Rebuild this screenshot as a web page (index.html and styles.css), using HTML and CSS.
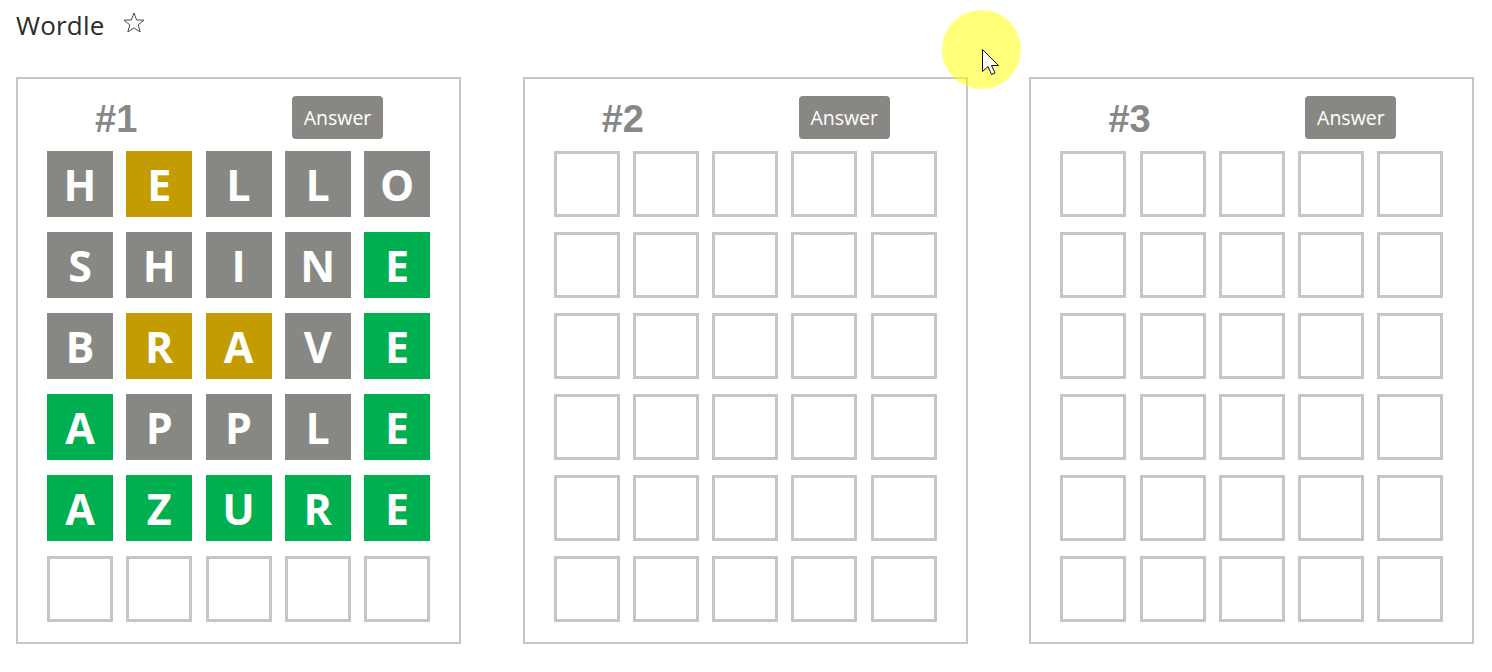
FILE: index.html
```html
<!DOCTYPE html>
<html>
<head>
<meta charset="utf-8">
<link rel="stylesheet" href="styles.css">
</head>
<body>
<div class="page">
  <div class="title-row">
    <span class="title">Wordle</span>
    <svg class="star" width="22" height="21" viewBox="0 0 22 21"><polygon points="11,1 13.6,7.9 21,8.2 15.2,12.9 17.2,20 11,15.9 4.8,20 6.8,12.9 1,8.2 8.4,7.9" fill="none" stroke="#4a4a46" stroke-width="1"/></svg>
  </div>
  <div class="boards">
    <section class="card">
      <div class="card-head"><span class="num">#1</span><button class="answer">Answer</button></div>
      <div class="grid">
        <div class="tile g">H</div><div class="tile y">E</div><div class="tile g">L</div><div class="tile g">L</div><div class="tile g">O</div>
        <div class="tile g">S</div><div class="tile g">H</div><div class="tile g">I</div><div class="tile g">N</div><div class="tile c">E</div>
        <div class="tile g">B</div><div class="tile y">R</div><div class="tile y">A</div><div class="tile g">V</div><div class="tile c">E</div>
        <div class="tile c">A</div><div class="tile g">P</div><div class="tile g">P</div><div class="tile g">L</div><div class="tile c">E</div>
        <div class="tile c">A</div><div class="tile c">Z</div><div class="tile c">U</div><div class="tile c">R</div><div class="tile c">E</div>
        <div class="tile e"></div><div class="tile e"></div><div class="tile e"></div><div class="tile e"></div><div class="tile e"></div>
      </div>
    </section>
    <section class="card">
      <div class="card-head"><span class="num">#2</span><button class="answer">Answer</button></div>
      <div class="grid">
        <div class="tile e"></div><div class="tile e"></div><div class="tile e"></div><div class="tile e"></div><div class="tile e"></div>
        <div class="tile e"></div><div class="tile e"></div><div class="tile e"></div><div class="tile e"></div><div class="tile e"></div>
        <div class="tile e"></div><div class="tile e"></div><div class="tile e"></div><div class="tile e"></div><div class="tile e"></div>
        <div class="tile e"></div><div class="tile e"></div><div class="tile e"></div><div class="tile e"></div><div class="tile e"></div>
        <div class="tile e"></div><div class="tile e"></div><div class="tile e"></div><div class="tile e"></div><div class="tile e"></div>
        <div class="tile e"></div><div class="tile e"></div><div class="tile e"></div><div class="tile e"></div><div class="tile e"></div>
      </div>
    </section>
    <section class="card">
      <div class="card-head"><span class="num">#3</span><button class="answer">Answer</button></div>
      <div class="grid">
        <div class="tile e"></div><div class="tile e"></div><div class="tile e"></div><div class="tile e"></div><div class="tile e"></div>
        <div class="tile e"></div><div class="tile e"></div><div class="tile e"></div><div class="tile e"></div><div class="tile e"></div>
        <div class="tile e"></div><div class="tile e"></div><div class="tile e"></div><div class="tile e"></div><div class="tile e"></div>
        <div class="tile e"></div><div class="tile e"></div><div class="tile e"></div><div class="tile e"></div><div class="tile e"></div>
        <div class="tile e"></div><div class="tile e"></div><div class="tile e"></div><div class="tile e"></div><div class="tile e"></div>
        <div class="tile e"></div><div class="tile e"></div><div class="tile e"></div><div class="tile e"></div><div class="tile e"></div>
      </div>
    </section>
  </div>
</div>
<div class="highlight"></div>
<svg class="cursor" width="18" height="27" viewBox="0 0 18 27"><polygon points="0.5,0.5 0.5,22.5 6,17.5 9.5,25.5 13,24 9.5,16.5 16.5,16.5" fill="#fff" stroke="#111" stroke-width="1" stroke-linejoin="miter"/></svg>
</body>
</html>
```
FILE: styles.css
```css
html, body {
  margin: 0;
  padding: 0;
  background: #ffffff;
}
body {
  font-family: "Open Sans", "Liberation Sans", sans-serif;
  width: 1492px;
  height: 672px;
  overflow: hidden;
  position: relative;
}
.page {
  padding: 8px 0 0 16px;
}
.title-row {
  display: flex;
  align-items: center;
  height: 34px;
}
.title {
  font-size: 26px;
  line-height: 34px;
  color: #2b2b28;
  letter-spacing: 0.2px;
}
.star {
  margin-left: 18px;
  margin-top: -5px;
}
.boards {
  display: flex;
  gap: 61.7px;
  margin-top: 35px;
}
.card {
  box-sizing: border-box;
  width: 445px;
  height: 567px;
  border: 2px solid #c6c6c6;
  padding: 17px 29px 0 29px;
}
.card-head {
  display: flex;
  justify-content: space-between;
  align-items: center;
  height: 43px;
  padding: 0 47px 0 48px;
  margin-bottom: 12px;
}
.num {
  font-family: "Liberation Sans", Arial, sans-serif;
  font-weight: 700;
  font-size: 38px;
  color: #878787;
  line-height: 43px;
  margin-top: 3px;
}
.answer {
  width: 91px;
  height: 43px;
  border: none;
  border-radius: 4px;
  background: #888784;
  color: #ffffff;
  font-family: "Open Sans", sans-serif;
  font-size: 19.5px;
  padding: 0;
  line-height: 43px;
}
.grid {
  display: grid;
  grid-template-columns: repeat(5, 66px);
  grid-auto-rows: 66px;
  column-gap: 13.25px;
  row-gap: 15px;
}
.tile {
  box-sizing: border-box;
  display: flex;
  align-items: center;
  justify-content: center;
  font-family: "Open Sans", sans-serif;
  font-weight: 700;
  font-size: 43px;
  color: #ffffff;
  line-height: 1;
}
.tile.g { background: #878784; }
.tile.y { background: #c29c00; }
.tile.c { background: #00b050; }
.tile.e { border: 3px solid #c6c6c6; background: #ffffff; }
.highlight {
  position: absolute;
  left: 942px;
  top: 10px;
  width: 79px;
  height: 79px;
  border-radius: 50%;
  background: rgba(255, 255, 0, 0.52);
  pointer-events: none;
}
.cursor {
  position: absolute;
  left: 982px;
  top: 49px;
}
```
